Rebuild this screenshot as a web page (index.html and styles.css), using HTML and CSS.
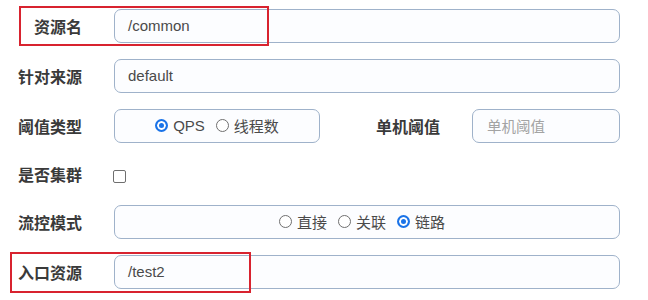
FILE: index.html
```html
<!DOCTYPE html>
<html lang="zh">
<head>
<meta charset="utf-8">
<link rel="stylesheet" href="styles.css">
</head>
<body>
<form class="form">
  <div class="row">
    <label class="label">资源名</label>
    <div class="field"><div class="input">/common</div></div>
    <span class="mark mark-1"></span>
  </div>
  <div class="row">
    <label class="label">针对来源</label>
    <div class="field"><div class="input">default</div></div>
  </div>
  <div class="row">
    <label class="label">阈值类型</label>
    <div class="field split">
      <div class="input radios narrow">
        <span class="opt"><span class="radio on"></span>QPS</span>
        <span class="opt"><span class="radio"></span>线程数</span>
      </div>
      <label class="label sub">单机阈值</label>
      <div class="input small placeholder">单机阈值</div>
    </div>
  </div>
  <div class="row short">
    <label class="label">是否集群</label>
    <div class="field"><span class="checkbox"></span></div>
  </div>
  <div class="row">
    <label class="label">流控模式</label>
    <div class="field">
      <div class="input radios wide">
        <span class="opt"><span class="radio"></span>直接</span>
        <span class="opt"><span class="radio"></span>关联</span>
        <span class="opt"><span class="radio on"></span>链路</span>
      </div>
    </div>
  </div>
  <div class="row">
    <label class="label">入口资源</label>
    <div class="field"><div class="input">/test2</div></div>
    <span class="mark mark-2"></span>
  </div>
</form>
</body>
</html>
```
FILE: styles.css
```css
html, body {
  margin: 0;
  padding: 0;
  background: #ffffff;
}
body {
  font-family: "Liberation Sans", "Noto Sans CJK SC", Arial, sans-serif;
  width: 648px;
  height: 300px;
  overflow: hidden;
}
.form {
  display: flex;
  flex-direction: column;
  gap: 16px;
  padding-top: 8.5px;
}
.row {
  position: relative;
  display: grid;
  grid-template-columns: 82px 506px;
  column-gap: 32px;
  align-items: center;
  height: 34px;
}
.row.short {
  height: 30px;
}
.label {
  font-family: "Noto Sans CJK SC", sans-serif;
  font-weight: 700;
  font-size: 16px;
  color: #3a3a3a;
  text-align: right;
  white-space: nowrap;
}
.field {
  display: flex;
  align-items: center;
  height: 100%;
}
.input {
  box-sizing: border-box;
  flex: 1;
  height: 34px;
  border: 1px solid #9fb2ca;
  border-radius: 7px;
  background: #fcfdff;
  display: flex;
  align-items: center;
  padding-left: 13px;
  font-size: 15px;
  color: #4a4a4a;
}
.split {
  display: flex;
}
.narrow {
  flex: 0 0 206px;
}
.label.sub {
  flex: 0 0 120px;
  width: 120px;
  padding-right: 32px;
  box-sizing: content-box;
}
.small {
  flex: 0 0 148px;
}
.placeholder {
  font-family: "Noto Sans CJK SC", sans-serif;
  color: #a3a3a3;
  font-size: 14.5px;
  padding-left: 14px;
}
.radios {
  justify-content: center;
  gap: 11px;
  padding-left: 0;
  font-family: "Liberation Sans", "Noto Sans CJK SC", sans-serif;
  font-size: 15px;
  color: #4a4a4a;
}
.radios.wide {
  padding-right: 10px;
}
.opt {
  display: inline-flex;
  align-items: center;
  gap: 5px;
}
.radio {
  box-sizing: border-box;
  width: 13px;
  height: 13px;
  border-radius: 50%;
  border: 1px solid #6f6f6f;
  background: #fff;
}
.radio.on {
  border: 2px solid #1a73e8;
  background: #1a73e8;
  box-shadow: inset 0 0 0 2px #fff;
}
.checkbox {
  box-sizing: border-box;
  width: 13px;
  height: 13px;
  border: 1px solid #6f6f6f;
  border-radius: 2px;
  margin-left: -1px;
  margin-top: 6px;
}
.mark {
  position: absolute;
  border: 2px solid #d8232f;
  box-sizing: border-box;
  pointer-events: none;
}
.mark-1 {
  left: 19px;
  top: -3px;
  width: 250px;
  height: 40px;
}
.mark-2 {
  left: 10px;
  top: -2.5px;
  width: 241px;
  height: 41px;
}
```
